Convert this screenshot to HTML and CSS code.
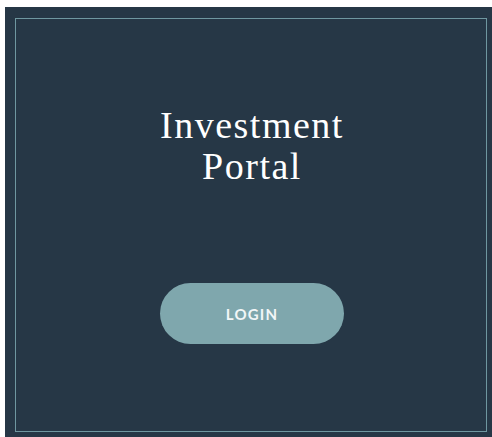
FILE: index.html
```html
<!DOCTYPE html>
<html lang="en">
<head>
<meta charset="utf-8">
<title>Investment Portal</title>
<link rel="stylesheet" href="styles.css">
</head>
<body>
  <main class="panel">
    <section class="frame">
      <h1 class="title">Investment<br>Portal</h1>
      <button class="login" type="button">LOGIN</button>
    </section>
  </main>
</body>
</html>
```
FILE: styles.css
```css
html, body {
  margin: 0;
  background: #ffffff;
  overflow: hidden;
}

.panel {
  margin: 7px 0 0 5px;
  width: 491px;
  height: 434px;
  box-sizing: border-box;
  padding: 11px 10px 10px 10px;
  background: #263746;
}

.frame {
  box-sizing: border-box;
  width: 472px;
  height: 414px;
  padding-left: 2px;
  border: 1px solid #6f97a0;
  display: flex;
  flex-direction: column;
  align-items: center;
}

.title {
  margin: 86px 0 0 0;
  font-family: "Liberation Serif", "Times New Roman", serif;
  font-weight: normal;
  font-size: 38px;
  line-height: 41px;
  letter-spacing: 1.5px;
  color: #ffffff;
  text-align: center;
}

.login {
  margin-top: 96px;
  width: 184px;
  height: 61px;
  border: none;
  border-radius: 31px;
  background: #7fa7ad;
  color: #f2f6f7;
  font-family: Lato, "Open Sans", sans-serif;
  font-weight: 700;
  font-size: 15px;
  letter-spacing: 1.2px;
  cursor: pointer;
}
```
